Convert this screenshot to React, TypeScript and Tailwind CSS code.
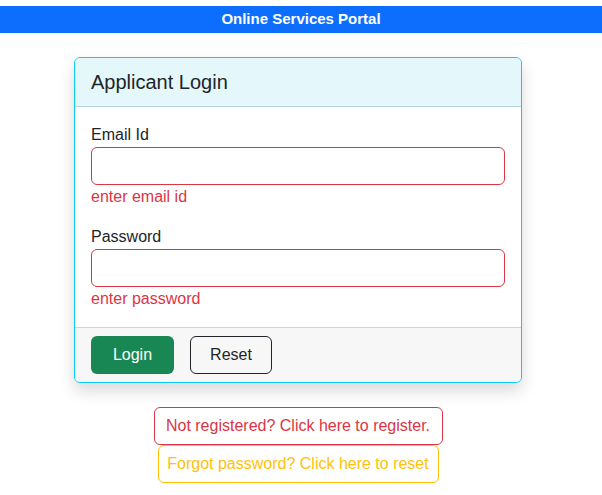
import { useState } from "react";

const font = { fontFamily: '"Liberation Sans", Arial, sans-serif' };

const App = () => {
  const [email, setEmail] = useState("");
  const [password, setPassword] = useState("");

  const reset = () => {
    setEmail("");
    setPassword("");
  };

  return (
    <div className="min-h-screen bg-white pt-[6px] text-[#212529]" style={font}>
      <div className="flex h-[27px] items-center justify-center bg-[#0d6efd] text-[15px] font-bold text-white">
        Online Services Portal
      </div>

      <div className="ml-[74px] mt-6 w-[448px]">
        <div className="overflow-hidden rounded-[6px] border border-[#0dcaf0] bg-white shadow-[0_8px_16px_rgba(0,0,0,0.15)]">
          <div className="flex h-[49px] items-center border-b border-[#b7d5da] bg-[#e4f7fb] px-4">
            <h2 className="text-[20px] font-medium leading-6">Applicant Login</h2>
          </div>

          <div className="p-4">
            <div className="mb-4">
              <label className="block text-base leading-6">Email Id</label>
              <input
                value={email}
                onChange={(e) => setEmail(e.target.value)}
                className="block h-[38px] w-full rounded-[6px] border border-[#dc3545] px-3 outline-none"
              />
              <div className="text-base leading-6 text-[#dc3545]">enter email id</div>
            </div>
            <div>
              <label className="block text-base leading-6">Password</label>
              <input
                type="password"
                value={password}
                onChange={(e) => setPassword(e.target.value)}
                className="block h-[38px] w-full rounded-[6px] border border-[#dc3545] px-3 outline-none"
              />
              <div className="text-base leading-6 text-[#dc3545]">enter password</div>
            </div>
          </div>

          <div className="flex gap-4 border-t border-[#d2d2d2] bg-[#f7f7f7] px-4 py-2">
            <button className="h-[38px] w-[83px] rounded-[6px] bg-[#198754] text-base text-white">
              Login
            </button>
            <button
              onClick={reset}
              className="h-[38px] w-[82px] rounded-[6px] border border-[#212529] text-base text-[#212529]"
            >
              Reset
            </button>
          </div>
        </div>

        <div className="mt-6 flex flex-col items-center">
          <button className="h-[38px] w-[289px] rounded-[6px] border border-[#dc3545] text-base text-[#dc3545]">
            Not registered? Click here to register.
          </button>
          <button className="h-[38px] w-[281px] rounded-[6px] border border-[#ffc107] text-base text-[#ffc107]">
            Forgot password? Click here to reset
          </button>
        </div>
      </div>
    </div>
  );
};

export default App;
